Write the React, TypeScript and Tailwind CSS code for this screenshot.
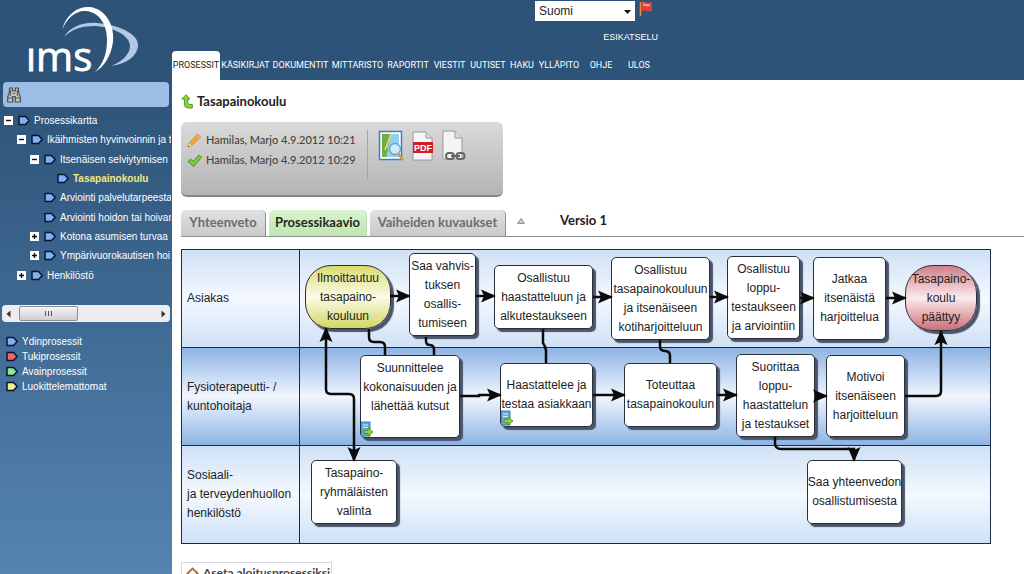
import React, { useState } from 'react';

type Tone = 'blue' | 'red' | 'green' | 'yellow';

const TAG_COLORS: Record<Tone, string> = {
  blue: '#7fb0f5',
  red: '#f0666c',
  green: '#8fe89a',
  yellow: '#f5ee8c',
};

const NAV = [
  'PROSESSIT',
  'KÄSIKIRJAT',
  'DOKUMENTIT',
  'MITTARISTO',
  'RAPORTIT',
  'VIESTIT',
  'UUTISET',
  'HAKU',
  'YLLÄPITO',
  'OHJE',
  'ULOS',
];

const TREE: { label: string; indent: string; toggle?: '+' | '-'; active?: boolean }[] = [
  { label: 'Prosessikartta', indent: 'pl-1', toggle: '-' },
  { label: 'Ikäihmisten hyvinvoinnin ja t', indent: 'pl-[17px]', toggle: '-' },
  { label: 'Itsenäisen selviytymisen', indent: 'pl-[30px]', toggle: '-' },
  { label: 'Tasapainokoulu', indent: 'pl-[43px]', active: true },
  { label: 'Arviointi palvelutarpeesta', indent: 'pl-[30px]' },
  { label: 'Arviointi hoidon tai hoivan', indent: 'pl-[30px]' },
  { label: 'Kotona asumisen turvaa', indent: 'pl-[30px]', toggle: '+' },
  { label: 'Ympärivuorokautisen hoi', indent: 'pl-[30px]', toggle: '+' },
  { label: 'Henkilöstö', indent: 'pl-[17px]', toggle: '+' },
];

const LEGEND: { label: string; tone: Tone }[] = [
  { label: 'Ydinprosessit', tone: 'blue' },
  { label: 'Tukiprosessit', tone: 'red' },
  { label: 'Avainprosessit', tone: 'green' },
  { label: 'Luokittelemattomat', tone: 'yellow' },
];

const LANES = [
  { label: 'Asiakas', fill: 'from-[#cfe1f6] via-[#f4f8fe] to-[#cfe1f6]' },
  { label: 'Fysioterapeutti- /\nkuntohoitaja', fill: 'from-[#8db3e4] via-[#f1f6fd] to-[#8db3e4]' },
  { label: 'Sosiaali-\nja terveydenhuollon\nhenkilöstö', fill: 'from-[#cfe1f6] via-[#f4f8fe] to-[#cfe1f6]' },
];

interface FlowNode {
  text: string;
  x: number;
  y: number;
  w: number;
  h: number;
  kind?: 'start' | 'end';
  doc?: boolean;
  top?: boolean;
}

// Positions on the chart canvas, measured from its top left corner
const NODES: FlowNode[] = [
  { text: 'Ilmoittautuu\ntasapaino-\nkouluun', x: 124, y: 16, w: 86, h: 64, kind: 'start' },
  { text: 'Saa vahvis-\ntuksen\nosallis-\ntumiseen', x: 228, y: 4, w: 67, h: 83 },
  { text: 'Osallistuu\nhaastatteluun ja\nalkutestaukseen', x: 313, y: 16, w: 99, h: 64 },
  { text: 'Osallistuu\ntasapainokouluun\nja itsenäiseen\nkotiharjoitteluun', x: 430, y: 8, w: 99, h: 83 },
  { text: 'Osallistuu\nloppu-\ntestaukseen\nja arviointiin', x: 546, y: 7, w: 73, h: 83 },
  { text: 'Jatkaa\nitsenäistä\nharjoittelua', x: 632, y: 8, w: 73, h: 83 },
  { text: 'Tasapaino-\nkoulu\npäättyy', x: 724, y: 16, w: 72, h: 66, kind: 'end' },
  { text: 'Suunnittelee\nkokonaisuuden ja\nlähettää kutsut', x: 179, y: 106, w: 100, h: 83, doc: true, top: true },
  { text: 'Haastattelee ja\ntestaa asiakkaan', x: 319, y: 114, w: 93, h: 64, doc: true },
  { text: 'Toteuttaa\ntasapainokoulun', x: 443, y: 114, w: 93, h: 64 },
  { text: 'Suorittaa\nloppu-\nhaastattelun\nja testaukset', x: 555, y: 105, w: 79, h: 83 },
  { text: 'Motivoi\nitsenäiseen\nharjoitteluun', x: 645, y: 106, w: 79, h: 82 },
  { text: 'Tasapaino-\nryhmäläisten\nvalinta', x: 130, y: 211, w: 86, h: 64 },
  { text: 'Saa yhteenvedon\nosallistumisesta', x: 626, y: 211, w: 95, h: 64 },
];

const ARROWS = [
  'M209 47H229',
  'M295 47H314',
  'M412 48H431',
  'M529 48H547',
  'M619 49H633',
  'M705 49H725',
  'M279 147H298V146H320',
  'M412 146H444',
  'M536 146H556',
  'M634 147H646',
  'M724 147H755Q760 147 760 142V82',
  'M594 188V194Q594 200 600 200H673V212',
];

const LINKS = [
  'M188 80V88Q188 93 193 93H199Q204 93 204 98V106',
  'M245 88V92Q245 96 249 96Q253 96 253 101V106',
  'M362 80V94Q365 98 365 102V114',
  'M479 91V97Q479 102 484 102Q489 102 489 107V114',
];

const TagIcon: React.FC<{ tone?: Tone }> = ({ tone = 'blue' }) => (
  <svg viewBox="0 0 12 11" className="w-3 h-[11px] shrink-0">
    <path d="M1 1.5H7.5L11.2 5.5L7.5 9.5H1Z" fill={TAG_COLORS[tone]} stroke="#0a1730" strokeWidth="1.5" strokeLinejoin="round" />
  </svg>
);

const Logo = () => (
  <svg viewBox="0 0 172 80" className="w-[172px] h-20 block shrink-0" role="img" aria-label="ims">
    <path d="M64 37C70 27 82 22 97 23C120 25 138 34 138 45C138 56 126 64 111 66C122 62 130 54 130 46C130 35 112 27 95 26C82 26 72 29 64 37Z" fill="#b3c8e6" />
    <path d="M62 30C66 14 78 6 90 7C106 9 115 26 113 42C111 56 104 67 95 72C103 64 107 54 107 40C107 24 99 12 86 11C76 10 67 18 62 30Z" fill="#fff" />
    <text x="26" y="71" fill="#fff" stroke="#fff" strokeWidth=".8" fontSize="40" fontFamily="'Open Sans', sans-serif">ıms</text>
  </svg>
);

const Binoculars = () => (
  <svg viewBox="0 0 14 16" className="w-[14px] h-4">
    <path d="M2.5 1H5.5V4H8.5V1H11.5V5L13.3 10V15H8.3V9.5H5.7V15H.7V10L2.5 5Z" fill="#c9c4b8" stroke="#4b4f58" strokeWidth="1.2" />
    <path d="M1 11H5.5M8.5 11H13M3.6 3V9M10.4 3V9M6 6.5H8" stroke="#4b4f58" />
  </svg>
);

const Sidebar = () => (
  <aside className="w-[172px] shrink-0 flex flex-col bg-linear-to-b from-[#2d5378] from-15% to-[#5584b2] text-white overflow-hidden">
    <Logo />
    <div className="mx-[3px] mt-[2px] h-[25px] rounded-sm bg-[#9bbde6] flex items-center pl-1 shrink-0">
      <label htmlFor="search" className="shrink-0"><Binoculars /></label>
      <input id="search" aria-label="Haku" className="flex-1 min-w-0 bg-transparent outline-none px-2 text-xs text-black" />
    </div>

    <ul className="mt-1 mr-px h-[174px] shrink-0 grid grid-rows-9 overflow-hidden text-[10px] whitespace-nowrap">
      {TREE.map((item) => (
        <li key={item.label} className={`flex items-center gap-1 ${item.indent}`}>
          {item.toggle ? (
            <button aria-label={item.toggle === '+' ? 'Avaa' : 'Sulje'} className="w-[9px] h-[9px] mr-px shrink-0 bg-white">
              <svg viewBox="0 0 9 9" className="block w-full h-full">
                <path d={item.toggle === '+' ? 'M2 4.5H7M4.5 2V7' : 'M2 4.5H7'} stroke="#111" strokeWidth="1.4" />
              </svg>
            </button>
          ) : (
            <span className="w-[9px] mr-px shrink-0" />
          )}
          <TagIcon />
          <a href="#" className={item.active ? 'font-bold text-[#f4e97c]' : ''}>{item.label}</a>
        </li>
      ))}
    </ul>

    <div className="mt-5 mx-[2px] h-[17px] shrink-0 bg-[#eeeef0] rounded-sm flex items-center px-1 gap-2">
      <svg viewBox="0 0 5 8" className="w-[5px] h-2"><path d="M4.5 .5V7.5L.5 4Z" fill="#333" /></svg>
      <div className="w-[59px] h-[15px] border border-[#8d8f94] rounded-[2px] bg-linear-to-b from-[#f4f4f4] to-[#cfd0d3] flex items-center justify-center gap-px">
        <i className="w-px h-[5px] bg-[#555]" />
        <i className="w-px h-[5px] bg-[#555] mx-px" />
        <i className="w-px h-[5px] bg-[#555]" />
      </div>
      <svg viewBox="0 0 5 8" className="w-[5px] h-2 ml-auto"><path d="M.5 .5V7.5L4.5 4Z" fill="#333" /></svg>
    </div>

    <ul className="mt-3 pl-[6px] text-[10px] leading-[15px]">
      {LEGEND.map((item) => (
        <li key={item.label} className="flex items-center gap-1">
          <TagIcon tone={item.tone} />
          {item.label}
        </li>
      ))}
    </ul>
  </aside>
);

const Header = () => (
  <header className="h-20 shrink-0 bg-[#2d5378] text-white flex flex-col">
    <div className="w-[486px] flex flex-col items-end">
      <div className="mt-px flex gap-1 pr-[5px]">
        <div className="relative h-5">
          <select aria-label="Kieli" defaultValue="Suomi" className="appearance-none block w-[100px] h-5 bg-white text-[#222] pl-1 text-xs leading-5">
            <option>Suomi</option>
            <option>English</option>
          </select>
          <svg viewBox="0 0 7 4" className="absolute right-1 top-[9px] w-[7px] h-1 pointer-events-none"><path d="M0 0H7L3.5 4Z" fill="#111" /></svg>
        </div>
        <svg viewBox="0 0 14 16" className="w-[14px] h-4">
          <path d="M1.5 1V15" stroke="#e08a4a" strokeWidth="1.6" />
          <path d="M2 1C5 -1 6 3 13 1V10C8 12 6 8 2 10Z" fill="#d8433b" />
          <path d="M4 2.5C6 2 7 4 11 3V5C7 6 6 4 4 4.5Z" fill="#f4a49a" />
        </svg>
      </div>
      <a href="#" className="mt-[9px] text-[9px] leading-[14px]">ESIKATSELU</a>
    </div>
    <nav className="mt-auto grid grid-cols-[48px_51px_59px_55px_46px_37px_40px_28px_46px_38px_38px] h-[29px] font-[Roboto] text-[9px]">
      {NAV.map((item, i) => (
        <a
          key={item}
          href="#"
          className={`flex items-center justify-center ${i === 0 ? 'bg-white text-[#222] rounded-t-[4px]' : ''}`}
        >
          {item}
        </a>
      ))}
    </nav>
  </header>
);

const InfoCard = () => (
  <section className="mt-[11px] w-[322px] h-[75px] rounded-md bg-linear-to-b from-[#dadada] to-[#b4b4b4] border-b-2 border-[#858585] flex pt-2 pl-[6px] text-[#444]">
    <div className="w-[181px] h-[50px] border-r border-[#a5a5a5] font-[Lato] font-medium text-[11px] leading-5 whitespace-nowrap">
      <p className="flex items-center gap-1">
        <svg viewBox="0 0 16 16" className="w-[15px] h-[15px] shrink-0">
          <path d="M1 15L2 11L11 1L15 4L5 13.500Z" fill="#f0a63c" stroke="#b97a26" strokeWidth=".6" />
          <path d="M11 1L15 4L13.500 6L9.500 2.800Z" fill="#d9a6a0" />
          <path d="M1 15L2 11L5 13.500Z" fill="#f3dcb5" />
          <path d="M1 15L1.400 13.400L2.600 14.400Z" fill="#333" />
        </svg>
        Hamilas, Marjo 4.9.2012 10:21
      </p>
      <p className="flex items-center gap-1">
        <svg viewBox="0 0 16 16" className="w-[15px] h-[15px] shrink-0">
          <path d="M1 9L4 6.500L6.500 9L13 2L15.500 4.500L7 14.500Z" fill="#7ccb3a" stroke="#3d8a18" strokeWidth=".9" strokeLinejoin="round" />
        </svg>
        Hamilas, Marjo 4.9.2012 10:29
      </p>
    </div>
    <div className="flex gap-2 pl-[10px]">
      <button aria-label="Esikatselukuva" className="w-[26px] h-8">
        <svg viewBox="0 0 26 32" className="w-full h-full">
          <rect x="1.500" y="1.500" width="22" height="28" fill="#fff" stroke="#3b7fc4" strokeWidth="1.500" />
          <rect x="4" y="4" width="17" height="23" fill="#8fd0ee" />
          <path d="M4 4H13C10 9 13 12 9 17C12 20 7 24 9 27H4Z" fill="#6eae3e" />
          <path d="M13 4L10 12L7 20" stroke="#e9d96a" strokeWidth="1.500" fill="none" />
          <circle cx="17" cy="19" r="5.500" fill="#cfeafa" stroke="#6d9cc0" strokeWidth="1.300" />
          <path d="M20.500 24L25 30" stroke="#d59a37" strokeWidth="2.600" />
        </svg>
      </button>
      <button aria-label="PDF" className="w-[22px] h-8">
        <svg viewBox="0 0 22 32" className="w-full h-full">
          <path d="M1 2H14L20 8V30H1Z" fill="#f7f7f7" stroke="#9a9a9a" />
          <path d="M14 2V8H20" fill="#ddd" stroke="#9a9a9a" />
          <rect x="1" y="12" width="20" height="11" fill="#cf2026" />
          <text x="11" y="21" textAnchor="middle" fontSize="9" fontWeight="bold" fill="#fff" fontFamily="Liberation Sans, sans-serif">PDF</text>
        </svg>
      </button>
      <button aria-label="Linkki" className="w-6 h-8">
        <svg viewBox="0 0 24 32" className="w-full h-full">
          <path d="M1 1H13L20 8V29H1Z" fill="#f4f4f4" stroke="#9a9a9a" />
          <path d="M13 1V8H20" fill="#ddd" stroke="#9a9a9a" />
          <g fill="none" stroke="#666" strokeWidth="2">
            <rect x="4" y="23" width="8" height="6" rx="3" />
            <rect x="14.500" y="23" width="8" height="6" rx="3" />
            <path d="M9 26H18" />
          </g>
        </svg>
      </button>
    </div>
  </section>
);

const TABS = [
  { label: 'Yhteenveto', size: 'w-[85px]' },
  { label: 'Prosessikaavio', size: 'w-[98px]' },
  { label: 'Vaiheiden kuvaukset', size: 'w-[136px]' },
];

const Tabs = () => {
  const [active, setActive] = useState('Prosessikaavio');
  return (
    <div className="mt-3 h-7 flex gap-[3px] items-end border-b border-[#8f8f8f] font-[Lato] font-bold">
      {TABS.map((tab) => (
        <button
          key={tab.label}
          onClick={() => setActive(tab.label)}
          className={`h-[26px] text-[13px] rounded-t-[5px] border-r ${tab.size} ${
            active === tab.label
              ? 'bg-linear-to-b from-[#d9f3cf] to-[#bfe6b0] border-[#c5dcbc] text-[#1f2b1c]'
              : 'bg-linear-to-b from-[#e2e2e2] to-[#c9c9c9] border-[#8f8f8f] text-[#6d6d6d]'
          }`}
        >
          {tab.label}
        </button>
      ))}
      <svg viewBox="0 0 8 6" className="w-2 h-[6px] ml-2 mb-3"><path d="M4 .7L7.300 5.300H.7Z" fill="#ddd" stroke="#777" /></svg>
      <span className="ml-8 mb-[6px] text-[13px] leading-5 text-[#222]">Versio 1</span>
    </div>
  );
};

const NODE_FILL = {
  box: 'rounded-[5px] bg-white',
  start: 'rounded-[26px] bg-linear-to-b from-[#d9dc6c] via-[#fbfbe6] to-[#d3d75c]',
  end: 'rounded-[28px] bg-linear-to-b from-[#cf7f8b] via-[#fbeaec] to-[#c9707d]',
};

const FlowChart = () => (
  <div className="relative mt-3 w-[810px] text-[#222] text-xs leading-[19px]">
    {LANES.map((lane) => (
      <div key={lane.label} className="h-[98px] grid grid-cols-[118px_1fr] border-x border-t border-[#1c2a44]">
        <div className={`flex items-center pl-[5px] whitespace-pre border-r border-[#1c2a44] bg-linear-to-b ${lane.fill}`}>
          {lane.label}
        </div>
        <div className={`bg-linear-to-b ${lane.fill}`} />
      </div>
    ))}
    <div className="border-t border-[#1c2a44]" />

    {NODES.map((n) => (
      <div
        key={n.text}
        className={`absolute flex justify-center text-center whitespace-pre border border-[#2a2f3a] shadow-[3px_3px_1px_#4a5468] ${
          n.top ? 'items-start pt-[3px]' : 'items-center'
        } ${NODE_FILL[n.kind ?? 'box']}`}
        style={{ left: n.x, top: n.y, width: n.w, height: n.h }}
      >
        {n.text}
        {n.doc && (
          <svg viewBox="0 0 12 16" className="absolute left-0 bottom-0 w-3 h-4">
            <path d="M0 1H9V15H0Z" fill="#5fa9de" stroke="#3d7db5" />
            <path d="M2 4H7M2 6.500H7" stroke="#d9eefc" />
            <path d="M3 9.500H7V7L12 11L7 15V12.500H3Z" fill="#8fd32f" stroke="#4c8f14" strokeWidth=".8" />
          </svg>
        )}
      </div>
    ))}

    <svg viewBox="0 0 810 295" className="absolute inset-0 w-full h-full pointer-events-none" fill="none" stroke="#0b0b0b" strokeWidth="2.500">
      <defs>
        <marker id="head" markerUnits="userSpaceOnUse" markerWidth="16" markerHeight="14" refX="14" refY="7" orient="auto-start-reverse">
          <path d="M0 0.500L15 7L0 13.500L3 7Z" fill="#0b0b0b" stroke="none" />
        </marker>
      </defs>
      {ARROWS.map((d) => <path key={d} d={d} markerEnd="url(#head)" />)}
      {LINKS.map((d) => <path key={d} d={d} />)}
      <path d="M145 79V140Q145 145 150 145H168Q173 145 173 150V212" markerStart="url(#head)" markerEnd="url(#head)" />
    </svg>
  </div>
);

const App: React.FC = () => (
  <div className="h-screen flex overflow-hidden bg-white font-['Liberation_Sans',sans-serif]">
    <Sidebar />
    <main className="flex-1 min-w-0 flex flex-col">
      <Header />
      <div className="pl-[9px]">
        <h1 className="mt-[11px] flex items-center gap-1 font-[Lato] font-bold text-[13px] leading-5 text-[#222]">
          <svg viewBox="0 0 12 15" className="w-3 h-[15px]">
            <path d="M5 .7L9 5H6.800V9Q6.800 10.500 8.500 10.500H11.300V14H7Q3.400 14 3.400 10V5H.8Z" fill="#8ed43a" stroke="#4a8f1a" strokeWidth=".9" />
          </svg>
          Tasapainokoulu
        </h1>
        <InfoCard />
        <Tabs />
        <FlowChart />
        <button className="mt-[18px] h-[22px] w-[151px] border border-[#d5d9de] flex items-center gap-1 pl-1 font-[Lato] font-bold text-xs text-[#444] whitespace-nowrap">
          <svg viewBox="0 0 13 13" className="w-[13px] h-[13px] shrink-0">
            <path d="M2.500 6V12H10.500V6" fill="#f4efe2" stroke="#7b6a4c" />
            <path d="M.8 7L6.500 1.500L12.200 7" fill="none" stroke="#a8752b" strokeWidth="1.800" />
            <rect x="5.500" y="7.500" width="2" height="4.500" fill="#7b6a4c" />
          </svg>
          Aseta aloitusprosessiksi
        </button>
      </div>
    </main>
  </div>
);

export default App;
